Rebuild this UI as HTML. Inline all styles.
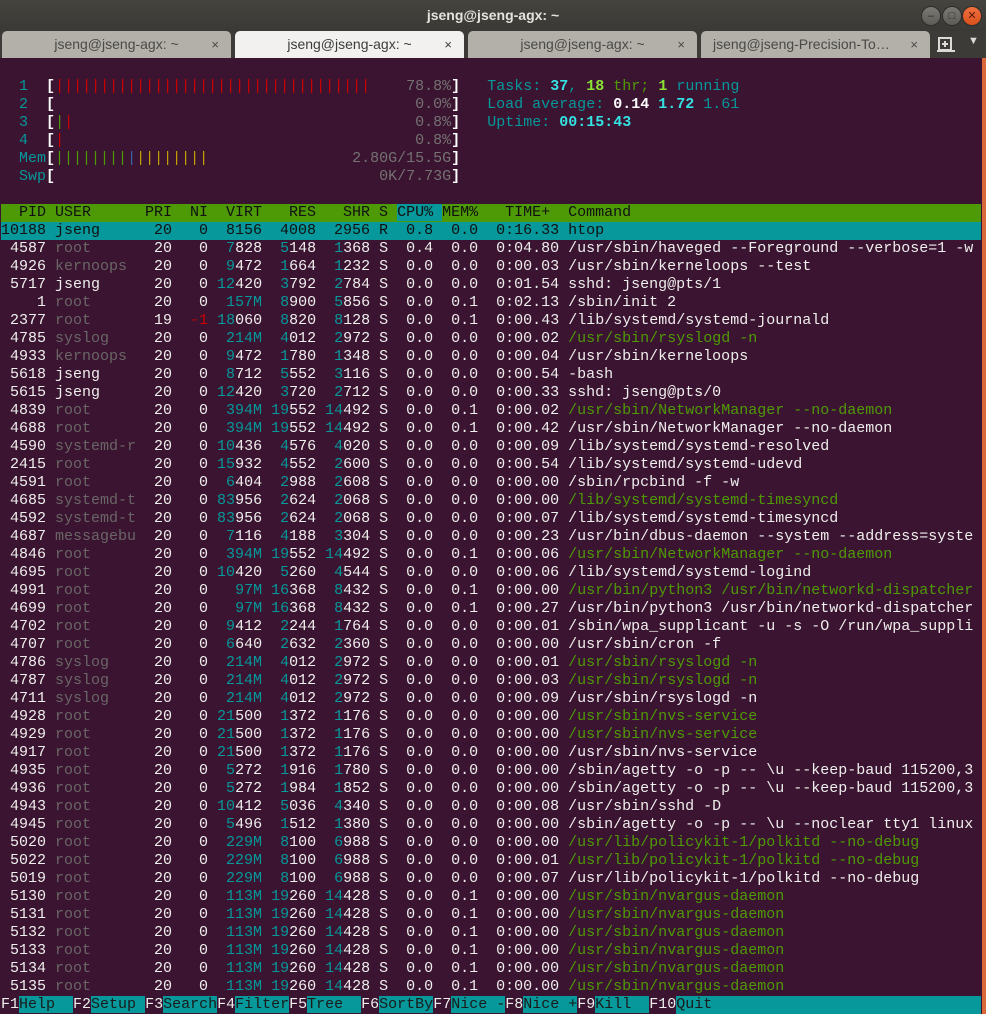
<!DOCTYPE html>
<html><head><meta charset="utf-8"><style>
*{margin:0;padding:0;box-sizing:border-box}
body{width:986px;height:1014px;overflow:hidden;background:#3b1431;position:relative;font-family:"Liberation Sans",sans-serif}
#title{position:absolute;left:0;top:0;width:986px;height:31px;background:linear-gradient(#45443f,#3a3935);color:#e6e3dc;font-weight:bold;font-size:14px;text-align:center;line-height:30px}
.btn{position:absolute;top:6px;width:20px;height:20px;border-radius:50%;background:linear-gradient(#7a7974,#5d5c57);border:1px solid #2e2d2a;color:#2e2d2a;font-size:11px;line-height:18px;text-align:center}
#tabs{position:absolute;left:0;top:31px;width:986px;height:27px;background:#3c3b37}
.tab{position:absolute;top:0;height:27px;width:229px;background:#b3afa9;border-radius:5px 5px 0 0;color:#4a4a48;font-size:14px;line-height:27px;text-align:center}
.tab.a{background:#f2f1f0;color:#3c3c3c}
.tab .x{position:absolute;right:12px;top:0;font-size:13px}
#term{position:absolute;left:1px;top:60px;width:980px;height:954px;overflow:hidden;font-family:"Liberation Mono",monospace;font-size:15px;line-height:18px;color:#eeeeec}
#term div{white-space:pre;height:18px;overflow:hidden}
c{color:#06989a} e{color:#6a6666} k{color:#4e9a06} r{color:#cc0000} y{color:#c4a000} bl{color:#3465a4} m{color:#757272}
bw{color:#fff;font-weight:bold} bc{color:#34e2e2;font-weight:bold} bg{color:#8ae234;font-weight:bold}
.hd{background:#4e9a06;color:#111;width:985px}
.hd s{text-decoration:none;background:#06989a}
.sel{background:#06989a;color:#111;width:985px}
.lab{background:#06989a;color:#1a1a1a}
#strip{position:absolute;left:982px;top:58px;width:4px;height:956px;background:#d8673a}
</style></head><body>
<div id="title">jseng@jseng-agx: ~</div>
<div class="btn" style="left:921px">–</div>
<div class="btn" style="left:942px">□</div>
<div class="btn" style="left:962px;background:linear-gradient(#f0703e,#d9501c);color:#5a1a05">✕</div>
<div id="tabs">
<div class="tab" style="left:2px">jseng@jseng-agx: ~<span class="x">×</span></div>
<div class="tab a" style="left:235px">jseng@jseng-agx: ~<span class="x">×</span></div>
<div class="tab" style="left:468px">jseng@jseng-agx: ~<span class="x">×</span></div>
<div class="tab" style="left:701px;text-align:left;padding-left:12px">jseng@jseng-Precision-To…<span class="x">×</span></div>
<svg style="position:absolute;left:936px;top:5px" width="20" height="18" viewBox="0 0 20 18"><rect x="3" y="2" width="12" height="12" fill="none" stroke="#dcdad5" stroke-width="2"/><path d="M9 5v6M6 8h6M1 15h18" stroke="#dcdad5" stroke-width="2"/></svg>
<div style="position:absolute;left:968px;top:4px;color:#dcdad5;font-size:11px">▼</div>
</div>
<div id="strip"></div>
<div id="term">
<div> </div>
<div>  <c>1</c>  <bw>[</bw><r>|||||||||||||||||||||||||||||||||||</r>    <m>78.8%</m><bw>]</bw>   <c>Tasks:</c> <bc>37</bc><c>,</c> <bg>18</bg> <k>thr;</k> <bg>1</bg> <c>running</c></div>
<div>  <c>2</c>  <bw>[</bw>                                        <m>0.0%</m><bw>]</bw>   <c>Load average:</c> <bw>0.14</bw> <bc>1.72</bc> <c>1.61</c></div>
<div>  <c>3</c>  <bw>[</bw><k>|</k><r>|</r>                                      <m>0.8%</m><bw>]</bw>   <c>Uptime:</c> <bc>00:15:43</bc></div>
<div>  <c>4</c>  <bw>[</bw><r>|</r>                                       <m>0.8%</m><bw>]</bw></div>
<div>  <c>Mem</c><bw>[</bw><k>||||||||</k><bl>|</bl><y>||||||||</y>                <m>2.80G/15.5G</m><bw>]</bw></div>
<div>  <c>Swp</c><bw>[</bw>                                    <m>0K/7.73G</m><bw>]</bw></div>
<div> </div>
<div class="hd">  PID USER      PRI  NI  VIRT   RES   SHR S <s>CPU% </s>MEM%   TIME+  Command</div>
<div class="sel">10188 jseng      20   0  8156  4008  2956 R  0.8  0.0  0:16.33 htop</div>
<div> 4587 <e>root     </e>  20   0  <c>7</c>828  <c>5</c>148  <c>1</c>368 S  0.4  0.0  0:04.80 /usr/sbin/haveged --Foreground --verbose=1 -w</div>
<div> 4926 <e>kernoops </e>  20   0  <c>9</c>472  <c>1</c>664  <c>1</c>232 S  0.0  0.0  0:00.03 /usr/sbin/kerneloops --test</div>
<div> 5717 jseng      20   0 <c>12</c>420  <c>3</c>792  <c>2</c>784 S  0.0  0.0  0:01.54 sshd: jseng@pts/1</div>
<div>    1 <e>root     </e>  20   0  <c>157M</c>  <c>8</c>900  <c>5</c>856 S  0.0  0.1  0:02.13 /sbin/init 2</div>
<div> 2377 <e>root     </e>  19  <r>-1</r> <c>18</c>060  <c>8</c>820  <c>8</c>128 S  0.0  0.1  0:00.43 /lib/systemd/systemd-journald</div>
<div> 4785 <e>syslog   </e>  20   0  <c>214M</c>  <c>4</c>012  <c>2</c>972 S  0.0  0.0  0:00.02 <k>/usr/sbin/rsyslogd -n</k></div>
<div> 4933 <e>kernoops </e>  20   0  <c>9</c>472  <c>1</c>780  <c>1</c>348 S  0.0  0.0  0:00.04 /usr/sbin/kerneloops</div>
<div> 5618 jseng      20   0  <c>8</c>712  <c>5</c>552  <c>3</c>116 S  0.0  0.0  0:00.54 -bash</div>
<div> 5615 jseng      20   0 <c>12</c>420  <c>3</c>720  <c>2</c>712 S  0.0  0.0  0:00.33 sshd: jseng@pts/0</div>
<div> 4839 <e>root     </e>  20   0  <c>394M</c> <c>19</c>552 <c>14</c>492 S  0.0  0.1  0:00.02 <k>/usr/sbin/NetworkManager --no-daemon</k></div>
<div> 4688 <e>root     </e>  20   0  <c>394M</c> <c>19</c>552 <c>14</c>492 S  0.0  0.1  0:00.42 /usr/sbin/NetworkManager --no-daemon</div>
<div> 4590 <e>systemd-r</e>  20   0 <c>10</c>436  <c>4</c>576  <c>4</c>020 S  0.0  0.0  0:00.09 /lib/systemd/systemd-resolved</div>
<div> 2415 <e>root     </e>  20   0 <c>15</c>932  <c>4</c>552  <c>2</c>600 S  0.0  0.0  0:00.54 /lib/systemd/systemd-udevd</div>
<div> 4591 <e>root     </e>  20   0  <c>6</c>404  <c>2</c>988  <c>2</c>608 S  0.0  0.0  0:00.00 /sbin/rpcbind -f -w</div>
<div> 4685 <e>systemd-t</e>  20   0 <c>83</c>956  <c>2</c>624  <c>2</c>068 S  0.0  0.0  0:00.00 <k>/lib/systemd/systemd-timesyncd</k></div>
<div> 4592 <e>systemd-t</e>  20   0 <c>83</c>956  <c>2</c>624  <c>2</c>068 S  0.0  0.0  0:00.07 /lib/systemd/systemd-timesyncd</div>
<div> 4687 <e>messagebu</e>  20   0  <c>7</c>116  <c>4</c>188  <c>3</c>304 S  0.0  0.0  0:00.23 /usr/bin/dbus-daemon --system --address=syste</div>
<div> 4846 <e>root     </e>  20   0  <c>394M</c> <c>19</c>552 <c>14</c>492 S  0.0  0.1  0:00.06 <k>/usr/sbin/NetworkManager --no-daemon</k></div>
<div> 4695 <e>root     </e>  20   0 <c>10</c>420  <c>5</c>260  <c>4</c>544 S  0.0  0.0  0:00.06 /lib/systemd/systemd-logind</div>
<div> 4991 <e>root     </e>  20   0   <c>97M</c> <c>16</c>368  <c>8</c>432 S  0.0  0.1  0:00.00 <k>/usr/bin/python3 /usr/bin/networkd-dispatcher</k></div>
<div> 4699 <e>root     </e>  20   0   <c>97M</c> <c>16</c>368  <c>8</c>432 S  0.0  0.1  0:00.27 /usr/bin/python3 /usr/bin/networkd-dispatcher</div>
<div> 4702 <e>root     </e>  20   0  <c>9</c>412  <c>2</c>244  <c>1</c>764 S  0.0  0.0  0:00.01 /sbin/wpa_supplicant -u -s -O /run/wpa_suppli</div>
<div> 4707 <e>root     </e>  20   0  <c>6</c>640  <c>2</c>632  <c>2</c>360 S  0.0  0.0  0:00.00 /usr/sbin/cron -f</div>
<div> 4786 <e>syslog   </e>  20   0  <c>214M</c>  <c>4</c>012  <c>2</c>972 S  0.0  0.0  0:00.01 <k>/usr/sbin/rsyslogd -n</k></div>
<div> 4787 <e>syslog   </e>  20   0  <c>214M</c>  <c>4</c>012  <c>2</c>972 S  0.0  0.0  0:00.03 <k>/usr/sbin/rsyslogd -n</k></div>
<div> 4711 <e>syslog   </e>  20   0  <c>214M</c>  <c>4</c>012  <c>2</c>972 S  0.0  0.0  0:00.09 /usr/sbin/rsyslogd -n</div>
<div> 4928 <e>root     </e>  20   0 <c>21</c>500  <c>1</c>372  <c>1</c>176 S  0.0  0.0  0:00.00 <k>/usr/sbin/nvs-service</k></div>
<div> 4929 <e>root     </e>  20   0 <c>21</c>500  <c>1</c>372  <c>1</c>176 S  0.0  0.0  0:00.00 <k>/usr/sbin/nvs-service</k></div>
<div> 4917 <e>root     </e>  20   0 <c>21</c>500  <c>1</c>372  <c>1</c>176 S  0.0  0.0  0:00.00 /usr/sbin/nvs-service</div>
<div> 4935 <e>root     </e>  20   0  <c>5</c>272  <c>1</c>916  <c>1</c>780 S  0.0  0.0  0:00.00 /sbin/agetty -o -p -- \u --keep-baud 115200,3</div>
<div> 4936 <e>root     </e>  20   0  <c>5</c>272  <c>1</c>984  <c>1</c>852 S  0.0  0.0  0:00.00 /sbin/agetty -o -p -- \u --keep-baud 115200,3</div>
<div> 4943 <e>root     </e>  20   0 <c>10</c>412  <c>5</c>036  <c>4</c>340 S  0.0  0.0  0:00.08 /usr/sbin/sshd -D</div>
<div> 4945 <e>root     </e>  20   0  <c>5</c>496  <c>1</c>512  <c>1</c>380 S  0.0  0.0  0:00.00 /sbin/agetty -o -p -- \u --noclear tty1 linux</div>
<div> 5020 <e>root     </e>  20   0  <c>229M</c>  <c>8</c>100  <c>6</c>988 S  0.0  0.0  0:00.00 <k>/usr/lib/policykit-1/polkitd --no-debug</k></div>
<div> 5022 <e>root     </e>  20   0  <c>229M</c>  <c>8</c>100  <c>6</c>988 S  0.0  0.0  0:00.01 <k>/usr/lib/policykit-1/polkitd --no-debug</k></div>
<div> 5019 <e>root     </e>  20   0  <c>229M</c>  <c>8</c>100  <c>6</c>988 S  0.0  0.0  0:00.07 /usr/lib/policykit-1/polkitd --no-debug</div>
<div> 5130 <e>root     </e>  20   0  <c>113M</c> <c>19</c>260 <c>14</c>428 S  0.0  0.1  0:00.00 <k>/usr/sbin/nvargus-daemon</k></div>
<div> 5131 <e>root     </e>  20   0  <c>113M</c> <c>19</c>260 <c>14</c>428 S  0.0  0.1  0:00.00 <k>/usr/sbin/nvargus-daemon</k></div>
<div> 5132 <e>root     </e>  20   0  <c>113M</c> <c>19</c>260 <c>14</c>428 S  0.0  0.1  0:00.00 <k>/usr/sbin/nvargus-daemon</k></div>
<div> 5133 <e>root     </e>  20   0  <c>113M</c> <c>19</c>260 <c>14</c>428 S  0.0  0.1  0:00.00 <k>/usr/sbin/nvargus-daemon</k></div>
<div> 5134 <e>root     </e>  20   0  <c>113M</c> <c>19</c>260 <c>14</c>428 S  0.0  0.1  0:00.00 <k>/usr/sbin/nvargus-daemon</k></div>
<div> 5135 <e>root     </e>  20   0  <c>113M</c> <c>19</c>260 <c>14</c>428 S  0.0  0.1  0:00.00 <k>/usr/sbin/nvargus-daemon</k></div>
<div style="width:980px">F1<span class="lab">Help  </span>F2<span class="lab">Setup </span>F3<span class="lab">Search</span>F4<span class="lab">Filter</span>F5<span class="lab">Tree  </span>F6<span class="lab">SortBy</span>F7<span class="lab">Nice -</span>F8<span class="lab">Nice +</span>F9<span class="lab">Kill  </span>F10<span class="lab" style="display:inline-block;width:320px">Quit</span></div>
</div>
</body></html>
